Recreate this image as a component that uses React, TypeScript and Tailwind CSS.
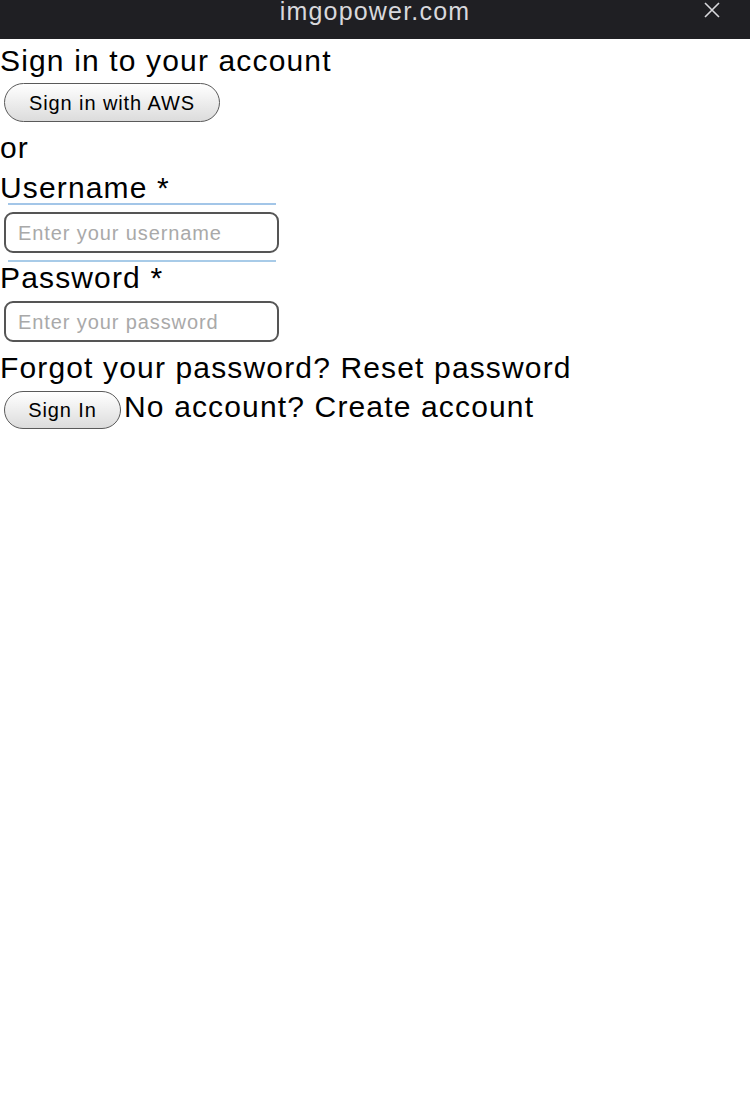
import React from 'react';

const font = { fontFamily: '"Liberation Sans", Arial, sans-serif' };

function PillButton({ children, className }: { children: React.ReactNode; className: string }) {
    return (
        <button
            className={`shrink-0 rounded-full border-[1.5px] border-[#5a5a5a] bg-gradient-to-b from-white to-[#dcdcdc] text-[20px] leading-none tracking-[0.9px] text-black ${className}`}
        >
            {children}
        </button>
    );
}

function Field({ placeholder, className }: { placeholder: string; className: string }) {
    return (
        <div
            className={`ml-[4px] flex h-[41px] w-[275px] items-center rounded-[9px] border-2 border-[#555] bg-white pl-[12px] text-[20px] tracking-[0.9px] text-[#a9a9a9] ${className}`}
        >
            {placeholder}
        </div>
    );
}

export default function App() {
    return (
        <div className="min-h-[1120px] bg-white text-black" style={font}>
            {/* browser sheet header */}
            <div className="relative h-[39px] overflow-hidden bg-[#1f1f23]">
                <div className="absolute left-0 right-0 top-[-1px] text-center text-[25px] leading-none tracking-[1.2px] text-[#d8d8dc]">
                    imgopower.com
                </div>
                <svg className="absolute left-[703px] top-[2px]" width="18" height="16" viewBox="0 0 18 16">
                    <path d="M2 1 L16 15 M16 1 L2 15" stroke="#d8d8dc" strokeWidth="1.6" fill="none" />
                </svg>
            </div>

            <div className="flex flex-col text-[30px] tracking-[1.15px]">
                <div className="mt-[2px] h-[40px] leading-[40px]">Sign in to your account</div>
                <PillButton className="ml-[4px] mt-[2px] h-[39px] w-[216px]">Sign in with AWS</PillButton>
                <div className="h-[49px] pt-[2px] leading-[48px]">or</div>
                <div className="h-[32px] leading-[33px]">Username *</div>
                <div className="ml-[8px] w-[268px] border-t-2 border-[#a3c6e8]" />
                <Field placeholder="Enter your username" className="mt-[7px]" />
                <div className="ml-[8px] mt-[7px] w-[268px] border-t-2 border-[#a8cbe8]" />
                <div className="h-[31px] leading-[31px]">Password *</div>
                <Field placeholder="Enter your password" className="mt-[8px]" />
                <div className="h-[48px] pt-[1px] leading-[49px]">Forgot your password? Reset password</div>
                <div className="mt-[1px] flex items-start">
                    <PillButton className="ml-[4px] h-[38px] w-[117px]">Sign In</PillButton>
                    <span className="ml-[3px] leading-[32px]">No account? Create account</span>
                </div>
            </div>
        </div>
    );
}
